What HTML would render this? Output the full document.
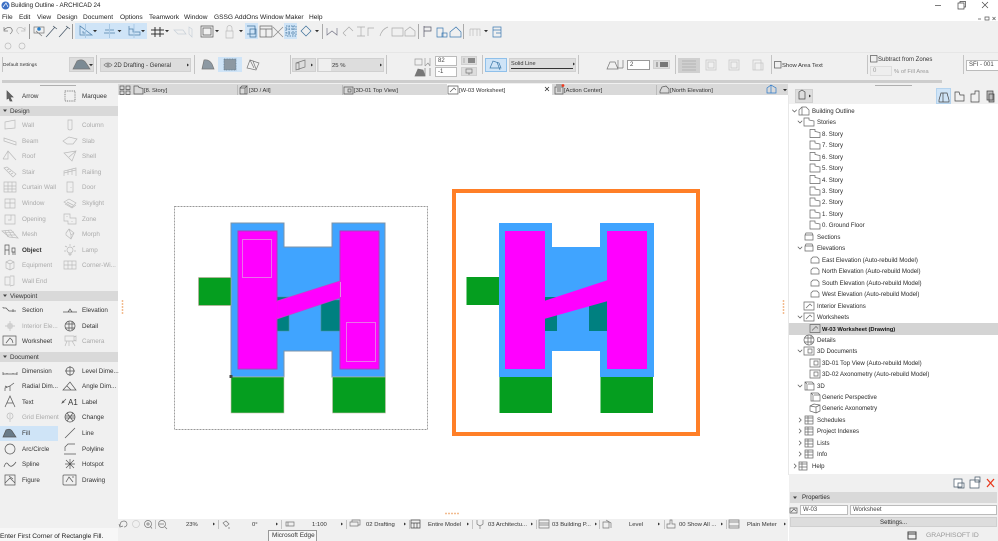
<!DOCTYPE html>
<html><head><meta charset="utf-8"><title>Building Outline - ARCHICAD 24</title>
<style>
html,body{margin:0;padding:0;background:#fff}
#p{position:relative;width:998px;height:541px;overflow:hidden;background:#fff;font:6.3px/10px "Liberation Sans",sans-serif;color:#333;filter:blur(.35px)}
.b{position:absolute}
.t{position:absolute;white-space:nowrap;line-height:10px;height:10px;margin-top:1px}
.r{font-size:6.1px;color:#2a2a2a}
.d{color:#aaa}
.h{position:absolute;background:#d9d9d9;color:#444;left:0;width:118px}
.m{font-size:6.6px;color:#222}
.i{position:absolute;background:#fff;border:1px solid #bbb;box-sizing:border-box;font-size:6px;line-height:8px;padding-left:2px;color:#444}
.g{position:absolute;background:#ddd;border:1px solid #d0d0d0;box-sizing:border-box}
.v{position:absolute;width:1px;background:#c4c4c4}
.s{font-size:5.9px;color:#333}
svg{position:absolute;left:0;top:0}
</style></head><body><div id="p">
<div class="b" style="left:0;top:21px;width:998px;height:74px;background:#f0f0f0"></div>
<div class="b" style="left:0;top:52px;width:998px;height:1px;background:#e6e6e6"></div>
<div class="b" style="left:2px;top:80px;width:940px;height:3px;background:#cdcdcd"></div>
<div class="b" style="left:0;top:95px;width:118px;height:433px;background:#f0f0f0"></div>
<div class="b" style="left:118px;top:84px;width:670px;height:11px;background:#d9d9d9"></div>
<div class="b" style="left:447px;top:84px;width:105px;height:11px;background:#fff"></div>
<div class="b" style="left:788px;top:84px;width:210px;height:20px;background:#f0f0f0"></div>
<div class="b" style="left:788px;top:95px;width:1px;height:380px;background:#e8e8e8"></div>
<div class="b" style="left:789px;top:474px;width:209px;height:67px;background:#f0f0f0"></div>
<div class="b" style="left:118px;top:519px;width:670px;height:22px;background:#f0f0f0"></div>
<div class="b" style="left:0;top:528px;width:118px;height:13px;background:#f7f7f7"></div>
<div class="b" style="left:789px;top:323px;width:209px;height:11.5px;background:#d4d4d4"></div>
<div class="b" style="left:75px;top:23px;width:72px;height:16px;background:#cfe4f7"></div>
<div class="b" style="left:245px;top:23px;width:13px;height:16px;background:#cfe4f7"></div>
<div class="b" style="left:284px;top:23px;width:13px;height:16px;background:#cfe4f7"></div>
<div class="b" style="left:936px;top:88px;width:15px;height:16px;background:#cfe4f7;border:1px solid #b4d3ee;box-sizing:border-box"></div>
<div class="b" style="left:0;top:426px;width:58px;height:15px;background:#cfe4f7"></div>
<div class="b" style="left:218px;top:57px;width:24px;height:15px;background:#cfe4f7"></div>
<div class="b" style="left:485px;top:58px;width:22px;height:14px;background:#cfe4f7;border:1px solid #8fc0ea;box-sizing:border-box"></div>
<div class="g" style="left:69px;top:57px;width:25px;height:15px"></div>
<div class="g" style="left:100px;top:58px;width:91px;height:14px"></div>
<div class="g" style="left:292px;top:58px;width:24px;height:14px"></div>
<div class="g" style="left:317px;top:58px;width:67px;height:14px"></div>
<div class="b" style="left:319px;top:59px;width:12px;height:12px;background:#efefef"></div>
<div class="g" style="left:509px;top:58px;width:67px;height:14px"></div>
<div class="b" style="left:511px;top:68px;width:62px;height:1px;background:#333"></div>
<div class="g" style="left:461px;top:56px;width:16px;height:9px"></div>
<div class="g" style="left:461px;top:67px;width:16px;height:9px"></div>
<div class="g" style="left:653px;top:60px;width:17px;height:9px"></div>
<div class="b" style="left:678px;top:58px;width:22px;height:15px;background:#d0d0d0"></div>
<div class="g" style="left:795px;top:89px;width:18px;height:14px"></div>
<div class="i" style="left:435px;top:56px;width:22px;height:10px">82</div>
<div class="i" style="left:435px;top:67px;width:22px;height:10px">-1</div>
<div class="i" style="left:627px;top:60px;width:23px;height:10px;border-color:#999">2</div>
<div class="i" style="left:870px;top:66px;width:22px;height:10px;background:#eee;color:#999;border-color:#ddd">0</div>
<div class="i" style="left:966px;top:60px;width:34px;height:11px;line-height:9px">SFI - 001</div>
<div class="v" style="left:96px;top:55px;height:19px"></div>
<div class="v" style="left:194px;top:55px;height:19px"></div>
<div class="v" style="left:290px;top:55px;height:19px"></div>
<div class="v" style="left:386px;top:55px;height:19px"></div>
<div class="v" style="left:482px;top:55px;height:19px"></div>
<div class="v" style="left:578px;top:55px;height:19px"></div>
<div class="v" style="left:675px;top:55px;height:19px"></div>
<div class="v" style="left:771px;top:55px;height:19px"></div>
<div class="v" style="left:867px;top:55px;height:19px"></div>
<div class="v" style="left:963px;top:55px;height:19px"></div>
<div class="v" style="left:2px;top:57px;height:15px"></div>
<div class="v" style="left:29px;top:24px;height:15px;background:#999"></div>
<div class="v" style="left:72px;top:24px;height:15px;background:#999"></div>
<div class="v" style="left:322px;top:24px;height:15px;background:#aaa"></div>
<div class="v" style="left:418px;top:24px;height:15px;background:#aaa"></div>
<div class="v" style="left:463px;top:24px;height:15px;background:#aaa"></div>
<div class="v" style="left:237px;top:85px;height:10px;background:#bbb"></div>
<div class="v" style="left:342px;top:85px;height:10px;background:#bbb"></div>
<div class="v" style="left:656px;top:85px;height:10px;background:#bbb"></div>
<div class="v" style="left:155px;top:520px;height:9px"></div>
<div class="v" style="left:218px;top:520px;height:9px"></div>
<div class="v" style="left:281px;top:520px;height:9px"></div>
<div class="v" style="left:346px;top:520px;height:9px"></div>
<div class="v" style="left:409px;top:520px;height:9px"></div>
<div class="v" style="left:472px;top:520px;height:9px"></div>
<div class="v" style="left:536px;top:520px;height:9px"></div>
<div class="v" style="left:599px;top:520px;height:9px"></div>
<div class="v" style="left:664px;top:520px;height:9px"></div>
<div class="v" style="left:726px;top:520px;height:9px"></div>
<div class="g" style="left:790px;top:517px;width:207px;height:10px"></div>
<div class="h" style="top:106px;height:10px"></div>
<div class="h" style="top:291px;height:10px"></div>
<div class="h" style="top:352px;height:10px"></div>
<div class="b" style="left:790px;top:492px;width:207px;height:11px;background:#d9d9d9"></div>
<div class="i" style="left:800px;top:505px;width:48px;height:10px">W-03</div>
<div class="i" style="left:850px;top:505px;width:147px;height:10px">Worksheet</div>

<svg width="998" height="541" viewBox="0 0 998 541" fill="none" stroke-width=".7">
<defs>
<path id="wall" d="M-5-3 5-5V3L-5 4Z"/>
<path id="column" d="M-2-5H2V4Q0 6-2 4Z"/>
<path id="beam" d="M-6-3 6 1V4L-6 0ZM-6 0"/>
<path id="slab" d="M-7 0-1-4 7-2 3 3-3 3Z"/>
<path id="roof" d="M-7 3-2-5 6 4M-7 3H-2L-2-5"/>
<path id="shell" d="M-6-3 6-5 2 5ZM-1 1 6-5"/>
<path id="stair" d="M-6-4-3-5 6 2 3 5ZM-3-2-1-3M-1 0 1-1M1 2 3 1"/>
<path id="rail" d="M-6 4V-1L6-4V4M-2 3V-2M2 3V-3M-6 1 6-2"/>
<path id="curtain" d="M-6-5H6V5H-6ZM-2-5V5M2-5V5M-6-1H6M-6 2H6"/>
<path id="door" d="M-3-5H3V5H-3ZM1 0V1"/>
<path id="window" d="M-5-4H5V5H-5ZM0-4V5M-5 0H5"/>
<path id="sky" d="M-6-1-1-4 6 0 2 4ZM-5 1 2 5 6 2M-3-1 3 2"/>
<path id="opening" d="M-5-4H5V5H-5ZM1-4V1H-2"/>
<path id="zone" d="M-6-5H0V-1H6V5H-2V2H-6ZM-3-2V-3M2 2V3"/>
<path id="mesh" d="M-8-3 1-4 8 4-1 3ZM-5-3-2 3M-2-4 3 4M-6-1 4-2M-3 1 6 1"/>
<path id="morph" d="M-4-1-1-5 4-1 1 5-4 1ZM-1-5 1 1 4-1M1 1 1 5"/>
<path id="object" d="M-5 5V-5H-1V0H-5M-1 0V5M2-2H5V2H2ZM3 2V5M5 2V5"/>
<path id="lamp" d="M-3 0A3 3 0 0 1 3 0A3 3 0 0 1-3 0M0-6V-4M-5-4-3-3M5-4 3-3M-6 1H-4M6 1H4M-2 4H2M-1 5H1"/>
<path id="equip" d="M-4-3 0-5 4-3V3L0 5-4 3ZM-4-3 0-1 4-3M0-1V5"/>
<path id="corner" d="M-6-4H6V4H-6ZM-2-4V4M2-4V4M-6 0H6"/>
<path id="wallend" d="M-5-4H0V4H-5ZM0-5 4-5V4L0 5"/>
<path id="arrow" d="M-3-5 3 1H0L2 5 0 5-1 2-3 3Z"/>
<path id="section" d="M-7-2H-4L-1 1H6M-7-2V-3M3-1V2"/>
<path id="elev" d="M-7 2H7M-2 2 0-1 2 2"/>
<path id="inter" d="M0-5V5M-5 0H5M-2-2H2V2H-2Z"/>
<path id="detail" d="M-5 0A5 5 0 1 1 5 0A5 5 0 1 1-5 0M-5-2H5M-5 2H5M-1-5V5M2-4V4"/>
<path id="work" d="M-7-5H6V4H-7ZM-4 2 0-3 2-1 3 2"/>
<path id="cam" d="M-5-5H4V0H-5ZM-3 0-5 5M2 0 5 5M-1 0V5M4-4 6-5V0L4-1"/>
<path id="dim" d="M-7 3H7M-7 1V4M7 1V4M-3 3V2M3 3V2"/>
<path id="level" d="M-5 0H5M0-5V5M-4 0A4 4 0 0 1 4 0A4 4 0 0 1-4 0"/>
<path id="radial" d="M-5 5V2L0 0 4-3M0 0V5M-5 0-3 1"/>
<path id="angle" d="M-7 4H6L0-4ZM-3 0 1 4"/>
<path id="text" d="M-5 5 0-6 5 5M-3 1H3"/>
<path id="grid" d="M0 5V2M-3-1A3 3 0 0 1 3-1A3 3 0 0 1-3-1M0-3V1"/>
<path id="change" d="M-5 0A5 5 0 1 1 5 0A5 5 0 1 1-5 0M-5-1H5M-5 1H5M-3-4 3 4M3-4-3 4"/>
<path id="line" d="M-5 5 5-5"/>
<path id="circle" d="M-5 0A5 5 0 1 1 5 0A5 5 0 1 1-5 0"/>
<path id="poly" d="M-6 5H6M-5 2V-2L-2-5H5"/>
<path id="spline" d="M-6 3Q-4-3-2 0T2 2 6-2"/>
<path id="hot" d="M-5 0H5M0-5V5M-4-4 4 4M4-4-4 4"/>
<path id="figure" d="M-5-5H5V5H-5ZM-5 3 0-2 5 3M-1-4 3-1"/>
<path id="draw" d="M-7-4Q-7-5-6-5H6V5H-6Q-7 5-7 4ZM-4 2-1-3 3 2M2-3H4"/>
<path id="fill" d="M-7 4-4-3Q0-5 2-2L6 4Z"/>
<path id="marq" d="M-5-5H5V5H-5Z" stroke-dasharray="1 .8"/>
<path id="story" d="M-5-4H0V-2L5-1V4H-5Z"/>
<path id="sect" d="M-4-2-3-4H3L4-2V3H-4ZM-4-2H4"/>
<path id="elevh" d="M-4 3V-1L-2-3H2L4-1V3Z"/>
<path id="house" d="M-5 4V-1L-2-4 2-4 5-1V4ZM-2-4V4"/>
<path id="wsh" d="M-5-4H5V4H-5ZM-3 2 1-2 3 0"/>
<path id="d3" d="M-4-4H3L5-2V4H-4ZM-4-4-2-2M-1-2H5M-2-2V4"/>
<path id="d3d" d="M-5-4H5V4H-5ZM-1-2H3V2H-1Z"/>
<path id="list" d="M-4-4H4V4H-4ZM-4-2H4M-4 1H4M-1-4V4"/>
<path id="cube" d="M-5-2-1-4 5-3V3L1 5-5 3ZM1 5V-1L-5-2M1-1 5-3"/>
<path id="caret" d="M0-1.5 2 0 0 1.5Z" fill="#333" stroke="none"/>
<path id="down" d="M-2-1H2L0 1.2Z" fill="#333" stroke="none"/>
<path id="chev" d="M-2.2-1.2 0 1 2.2-1.2"/>
<path id="chevr" d="M-1-2.2 1.2 0-1 2.2"/>
</defs>
<rect x="174.500" y="206.500" width="253" height="223" stroke="#777" stroke-dasharray="2 1"/>
<path d="M231 223H284V247H332V223H385V377H332V351H284V377H231Z" fill="#40a4ff" stroke="#7c93a8" stroke-width="1"/>
<rect x="198.500" y="277.500" width="32.500" height="28" fill="#059e1f" stroke="#c9a8a0" stroke-width=".6"/>
<rect x="231" y="377" width="53" height="36" fill="#059e1f" stroke="#c9c0b0" stroke-width=".6"/>
<rect x="332.500" y="377" width="53" height="36" fill="#059e1f" stroke="#c9c0b0" stroke-width=".6"/>
<path d="M277 297H289V331H277ZM321 300H340V331H321Z" fill="#008080" stroke="#4d8f96" stroke-width=".6"/>
<path d="M238 231H277V369H238ZM340 231H379V369H340Z" fill="#ff00ff" stroke="#b23bb8" stroke-width="1"/>
<path d="M277 301 340 281V298L277 319Z" fill="#ff00ff" stroke="#c93ccc" stroke-width=".7"/>
<path d="M276 302V318" stroke="#ff00ff" stroke-width="2.500"/>
<path d="M340.500 282V297" stroke="#e08ae0" stroke-width="1"/>
<rect x="242.500" y="239.500" width="29" height="38" stroke="#e77fe7" stroke-width=".9"/>
<rect x="346.500" y="322.500" width="29" height="39" stroke="#e77fe7" stroke-width=".9"/>
<rect x="229.500" y="375" width="3" height="3" fill="#444"/>
<rect x="454" y="191" width="244" height="243" stroke="#ff7f27" stroke-width="4"/>
<path d="M499 223H552V247H600V223H654V377H600V351H552V377H499Z" fill="#40a4ff"/>
<rect x="466.500" y="277" width="32.500" height="28" fill="#059e1f"/>
<rect x="499.500" y="377" width="52.500" height="36" fill="#059e1f"/>
<rect x="600.500" y="377" width="52.500" height="36" fill="#059e1f"/>
<path d="M545 297H557V331H545ZM589 300H607V331H589Z" fill="#008080"/>
<path d="M505 231H545V369H505ZM607 231H647V369H607Z" fill="#ff00ff"/>
<path d="M544 301 608 280V301L544 319Z" fill="#ff00ff"/>
<path d="M40 85.500H76M875 85.500H912" stroke="#999"/>
<path d="M445 513.500H460" stroke="#f2bc90" stroke-dasharray="2 1" stroke-width="1.500"/>
<path d="M122.500 300V315M783.500 300V315" stroke="#f2bc90" stroke-dasharray="2 1" stroke-width="1.500"/>
<g stroke="#bbb">
<use href="#wall" x="10" y="125"/><use href="#column" x="70" y="125"/>
<use href="#beam" x="10" y="141"/><use href="#slab" x="70" y="141"/>
<use href="#roof" x="10" y="156"/><use href="#shell" x="70" y="156"/>
<use href="#stair" x="10" y="172"/><use href="#rail" x="70" y="172"/>
<use href="#curtain" x="10" y="187"/><use href="#door" x="70" y="187"/>
<use href="#window" x="10" y="203"/><use href="#sky" x="70" y="203"/>
<use href="#opening" x="10" y="219"/><use href="#zone" x="70" y="219"/>
<use href="#mesh" x="10" y="234"/><use href="#morph" x="70" y="234"/>
<use href="#lamp" x="70" y="250"/>
<use href="#equip" x="10" y="265"/><use href="#corner" x="70" y="265"/>
<use href="#wallend" x="10" y="281"/>
<use href="#inter" x="10" y="326"/><use href="#cam" x="70" y="341"/>
<use href="#grid" x="10" y="417"/>
</g>
<g stroke="#555">
<use href="#arrow" x="10" y="96" fill="#666"/><use href="#marq" x="70" y="96"/>
<use href="#object" x="10" y="250"/>
<use href="#section" x="10" y="310"/><use href="#elev" x="70" y="310"/>
<use href="#detail" x="70" y="326"/><use href="#work" x="10" y="341"/>
<use href="#dim" x="10" y="371"/><use href="#level" x="70" y="371"/>
<use href="#radial" x="10" y="386"/><use href="#angle" x="70" y="386"/>
<use href="#text" x="10" y="402"/>
<use href="#change" x="70" y="417"/>
<use href="#fill" x="10" y="433" fill="#6a7b88"/><use href="#line" x="70" y="433"/>
<use href="#circle" x="10" y="449"/><use href="#poly" x="70" y="449"/>
<use href="#spline" x="10" y="464"/><use href="#hot" x="70" y="464"/>
<use href="#figure" x="10" y="480"/><use href="#draw" x="70" y="480"/>
<path d="M63 402 66 399M62 403 64 402 63 401Z"/>
</g>
<path d="M3 109.500H7L5 112Z M3 294.500H7L5 297Z M3 355.500H7L5 358Z M793 496.500H797L795 499Z" fill="#444"/>
<g stroke="#777">
<path d="M4 30Q8 26 11 28 14 31 10 34M4 27V31H8"/>
<path d="M25 30Q21 26 18 28 15 31 19 34M25 27V31H21" stroke="#bbb"/>
<path d="M34 27H44V33H34ZM36 31 42 36"/>
<circle cx="39" cy="29" r="1.800" fill="#2a7fc8" stroke="none"/>
<path d="M47 36 55 27M46 37 48 35M53 26 57 29" stroke="#456"/>
<path d="M60 36 68 27M59 37 61 35M66 26 70 29" stroke="#456"/>
<path d="M80 26V35H92ZM83 31V33H86" stroke="#4d7ea8"/>
<path d="M104 33H115M105 30 114 30" stroke="#4d7ea8"/>
<path d="M129 26V35H140V32H133V29H129" stroke="#4d7ea8"/>
<path d="M155 27V37M160 27V37M151 30H164M151 34H164" stroke="#333" stroke-width="1"/>
<path d="M174 30 183 30 186 34 178 34Z" stroke="#c8d0d8"/>
<path d="M189 27V34L192 37V29Z" stroke="#c8d0d8"/>
<path d="M201 26H213V37H201ZM203 28H211V35H203Z" stroke="#555"/>
<path d="M226 31H233V38H226ZM227 31V28A2 2 0 0 1 232 28V31" stroke="#bbb"/>
<path d="M247 26H255V34H247M250 29H256V37H250Z" stroke="#3b6e99"/>
<path d="M260 26H272V37H260ZM260 29H272M266 29V37" stroke="#666"/>
<path d="M273 27 283 37M283 27 273 37" stroke="#888"/>
<path d="M286 26H296V36H286ZM289 26V36M293 26V36M286 29H296M286 33H296" stroke="#3b6e99" stroke-dasharray="1.500 1"/>
<path d="M301 31 306 26 311 31 306 36Z" stroke="#3b6e99"/>
<path d="M327 28V35L332 31 337 35V28" stroke="#778"/>
<g stroke="#aaa"><path d="M343 33 349 27 353 31M343 33 346 36"/><path d="M357 27H365M361 27V36M357 36H365"/><path d="M368 36V28H374"/><path d="M380 36Q382 29 388 27"/><path d="M392 28H403V36H392Z"/><path d="M405 36V31L410 27 415 31V36Z"/></g>
<path d="M424 26V37M424 27H431V31H424" stroke="#556"/>
<path d="M437 28H443V37H437ZM442 33H447V37H442Z" stroke="#3b78b0"/>
<path d="M450 32 456 27 461 32V37H450Z" stroke="#3b78b0"/>
<path d="M470 29H480V36M470 29V36M473 29V36M477 29V36" stroke="#bbb"/>
<path d="M493 27H501V37H493ZM493 30H501M496 33H501" stroke="#3b78b0"/>
<circle cx="8" cy="46" r="3" stroke="#bbb"/><circle cx="22" cy="46" r="3" stroke="#bbb"/>
</g>
<use href="#down" x="95" y="31"/><use href="#down" x="119.500" y="31"/><use href="#down" x="143" y="31"/><use href="#down" x="167" y="31"/><use href="#down" x="217" y="31"/><use href="#down" x="241" y="31"/><use href="#down" x="317" y="31"/><use href="#down" x="486" y="31"/>
<path d="M85.500 24V38M109.500 24V38M134 24V38" stroke="#a8c8e4" stroke-width="1"/>
<circle cx="5.500" cy="5.500" r="4" fill="#3b6fc4"/>
<path d="M3 7 6 3 8 7" stroke="#fff"/>
<path d="M935 5.500H941" stroke="#444"/>
<path d="M958 3H964V9H958ZM960 3V1.500H965.500V7H964" stroke="#444"/>
<path d="M982 2 988 8M988 2 982 8" stroke="#444"/>
<path d="M978 19H981M985 17H989V20H985ZM992.500 17 995.500 20M995.500 17 992.500 20" stroke="#555"/>
<g stroke="#777">
<path d="M73 69 77 61Q83 58 86 63L90 69Z" fill="#7b8a94"/>
<path d="M104 65Q108 61 112 65 108 69 104 65Z"/><circle cx="108" cy="65" r="1"/>
<path d="M202 69 204 60Q209 59 212 64L214 69Z" fill="#8d99a3"/>
<path d="M224 59H236V70H224Z" fill="#8c98a2" stroke="#5b7a92" stroke-dasharray="1 .6"/>
<path d="M247 68 250 60 259 63 256 70ZM250 60 254 68M253 61 256 69"/>
<path d="M296 63 305 60V67L296 70ZM296 63H299V70"/>
<path d="M415 59H422V65H415ZM425 58V66M430 58V66M425 66 428 63 430 66" stroke="#999"/>
<path d="M415 76 418 69 423 70 425 76Z" fill="#777"/><path d="M425 68V76M430 68V76"/>
<path d="M490 68 493 61 499 63 501 68ZM497 62 500 70" stroke="#3b78a8"/>
<path d="M607 69 610 62 615 62 618 69ZM618 60V68M623 60V68M618 68H623"/>
<path d="M682 61H696M682 64H696M682 67H696M682 70H696" stroke="#aaa"/>
<g stroke="#c4c4c4"><rect x="706" y="60" width="10" height="10"/><rect x="708" y="62" width="6" height="6"/><rect x="729" y="60" width="10" height="10"/><rect x="731" y="62" width="6" height="6"/><path d="M753 60H761V70H753ZM755 63H763V70H755Z"/></g>
<path d="M464 58V63" stroke="#999"/><rect x="468" y="58" width="7" height="5" fill="#888" stroke="none"/>
<rect x="656" y="62" width="2" height="5" fill="#aaa" stroke="none"/><rect x="660" y="62" width="8" height="5" fill="#777" stroke="none"/>
<path d="M466 69H472V73H466ZM469 73V75"/>
</g>
<rect x="774.500" y="61.500" width="6.500" height="6.500" stroke="#555"/>
<rect x="870.500" y="55.500" width="6.500" height="6.500" stroke="#555"/>
<use href="#caret" x="187" y="65"/><use href="#caret" x="311" y="65"/><use href="#caret" x="380" y="65"/><use href="#caret" x="573" y="64"/><use href="#down" x="91" y="65"/><use href="#caret" x="809" y="96"/>
<g stroke="#555">
<path d="M120 86H124V89.500H120ZM126 86H130V89.500H126ZM120 91H124V94.500H120ZM126 91H130V94.500H126Z"/>
<path d="M134 94V86H138L139 87.500 143 88.500V94Z"/>
<path d="M240 88H245L247 86V94H240ZM240 88 242 86H247M245 88V94"/>
<path d="M344 87H353V94H344ZM348 89H351V92H348Z"/>
<path d="M448 86H458V94H448ZM450 92 454 88 456 90"/>
<path d="M555 87V94H563V87ZM556 85H562M557 89H561M557 91H561"/>
<path d="M660 91 662 87 666 86 669 89V93H660Z"/>
<path d="M545 87 549 91M549 87 545 91" stroke="#222"/>
<path d="M767 93V88L771 85 776 88V93ZM771 85V93" stroke="#2a78c8"/>
<path d="M799 92 802 90 805 92V99H799Z" stroke="#444"/>
</g>
<circle cx="563" cy="85.500" r="1.400" fill="#f03a1e"/>
<use href="#down" x="785" y="90"/>
<g stroke="#444">
<path d="M939 100 941 93 947 93 949 100V102H939ZM943 93V102"/>
<path d="M955 92V101H964V95H960L959 92Z"/>
<path d="M971 94H975V91H979V102H971Z"/>
<path d="M987 91H993V100H987ZM989 94H994V102H989Z" fill="#bbb"/>
</g>
<g stroke="#666">
<use href="#house" x="804" y="111"/><use href="#story" x="809" y="122"/>
<use href="#story" x="815" y="133.500"/><use href="#story" x="815" y="145"/><use href="#story" x="815" y="156.500"/><use href="#story" x="815" y="168"/><use href="#story" x="815" y="179.500"/><use href="#story" x="815" y="191"/><use href="#story" x="815" y="202"/><use href="#story" x="815" y="214"/><use href="#story" x="815" y="225"/>
<use href="#sect" x="809" y="237"/><use href="#sect" x="809" y="248"/>
<use href="#elevh" x="815" y="260"/><use href="#elevh" x="815" y="271"/><use href="#elevh" x="815" y="283"/><use href="#elevh" x="815" y="294"/>
<use href="#wsh" x="809" y="306"/><use href="#wsh" x="809" y="317"/><use href="#wsh" x="815" y="328.500"/>
<use href="#detail" x="809" y="340"/><use href="#d3d" x="809" y="351"/><use href="#d3d" x="815" y="363"/><use href="#d3d" x="815" y="374"/>
<use href="#d3" x="809" y="386"/><use href="#d3" x="815" y="397"/><use href="#cube" x="815" y="408"/>
<use href="#list" x="809" y="420"/><use href="#list" x="809" y="431"/><use href="#list" x="809" y="443"/><use href="#list" x="809" y="454"/><use href="#list" x="803" y="466"/>
</g>
<g stroke="#555">
<use href="#chev" x="794.500" y="111"/><use href="#chev" x="800" y="122"/><use href="#chev" x="800" y="248"/><use href="#chev" x="800" y="317"/><use href="#chev" x="800" y="351"/><use href="#chev" x="800" y="386"/>
<use href="#chevr" x="800" y="420"/><use href="#chevr" x="800" y="431"/><use href="#chevr" x="800" y="443"/><use href="#chevr" x="800" y="454"/><use href="#chevr" x="795" y="466"/>
</g>
<path d="M954 479H962V487H954Z M958 483H964V488H958Z" stroke="#456" fill="#fff"/>
<path d="M970 480H979V488H970ZM975 477H980V482H975Z" stroke="#456" fill="#fff"/>
<path d="M987 479 994 487M994 479 987 487" stroke="#e8391d" stroke-width="1.300"/>
<path d="M790 508H797V513H790ZM791 512 794 509 796 511" stroke="#555"/>
<path d="M908 532H916V539H908ZM908 534H916" stroke="#444" stroke-width="1"/>
<g stroke="#777">
<path d="M120 526Q120 521 124 521A3 3 0 0 1 124 527M119 524 120 527 123 526"/>
<circle cx="136" cy="524" r="3.500" stroke="#ccc"/>
<circle cx="148" cy="524" r="3.500"/><path d="M146 524H150M148 522V526M150.500 526.500 152 528.500"/>
<circle cx="162" cy="524" r="3.500"/><path d="M165 527 167 529M159 524H164"/>
<path d="M223 523 226 521 229 524 226 526.500ZM228 528H230"/>
<path d="M286 522H294V526H286ZM288 522V526"/>
<path d="M350 522H358V526H350ZM352 522V520H360V525H358"/>
<path d="M411 520H420V528H411ZM411 523H420M414 523V528M417 523V528" stroke="#444"/>
<path d="M477 520V524Q480 527 483 524V520M480 526V529"/>
<path d="M539 520H549V528H539ZM539 523H549M539 525H549"/>
<path d="M603 522H609V528H603ZM606 520 611 523V528"/>
<path d="M667 528H675V524H672V520H670V524H667Z"/>
<path d="M729 520H739V528H729ZM729 522H739M729 526H739"/>
</g>
<use href="#caret" x="213" y="524"/><use href="#caret" x="276" y="524"/><use href="#caret" x="341" y="524"/><use href="#caret" x="404" y="524"/><use href="#caret" x="467" y="524"/><use href="#caret" x="531" y="524"/><use href="#caret" x="595" y="524"/><use href="#caret" x="658" y="524"/><use href="#caret" x="721" y="524"/><use href="#caret" x="784" y="524"/>
</svg>

<div class="t" style="left:11px;top:0;font-size:6.2px;color:#222">Building Outline - ARCHICAD 24</div>
<div class="t m" style="left:2px;top:12px">File</div>
<div class="t m" style="left:19px;top:12px">Edit</div>
<div class="t m" style="left:37px;top:12px">View</div>
<div class="t m" style="left:57px;top:12px">Design</div>
<div class="t m" style="left:83px;top:12px">Document</div>
<div class="t m" style="left:120px;top:12px">Options</div>
<div class="t m" style="left:149px;top:12px">Teamwork</div>
<div class="t m" style="left:184px;top:12px">Window</div>
<div class="t m" style="left:214px;top:12px">GSSG AddOns</div>
<div class="t m" style="left:260px;top:12px">Window Maker</div>
<div class="t m" style="left:309px;top:12px">Help</div>
<div class="t" style="left:3px;top:60px;font-size:4.8px">Default Settings</div>
<div class="t s" style="left:114px;top:60px;font-size:6px">2D Drafting - General</div>
<div class="t s" style="left:332px;top:60px">25 %</div>
<div class="t s" style="left:511px;top:58px;font-size:5.6px">Solid Line</div>
<div class="t s" style="left:782px;top:60px">Show Area Text</div>
<div class="t s" style="left:878px;top:54px;font-size:6px">Subtract from Zones</div>
<div class="t s" style="left:894px;top:66px;color:#999">% of Fill Area</div>
<div class="t s" style="left:144px;top:85px;font-size:5.8px">[8. Story]</div>
<div class="t s" style="left:249px;top:85px;font-size:5.8px">[3D / All]</div>
<div class="t s" style="left:354px;top:85px;font-size:5.8px">[3D-01 Top View]</div>
<div class="t s" style="left:459px;top:85px;font-size:5.8px">[W-03 Worksheet]</div>
<div class="t s" style="left:564px;top:85px;font-size:5.8px">[Action Center]</div>
<div class="t s" style="left:670px;top:85px;font-size:5.8px">[North Elevation]</div>
<div class="t" style="left:22px;top:91px">Arrow</div><div class="t" style="left:82px;top:91px">Marquee</div>
<div class="t" style="left:10px;top:106px">Design</div>
<div class="t d" style="left:22px;top:120px">Wall</div><div class="t d" style="left:82px;top:120px">Column</div>
<div class="t d" style="left:22px;top:136px">Beam</div><div class="t d" style="left:82px;top:136px">Slab</div>
<div class="t d" style="left:22px;top:151px">Roof</div><div class="t d" style="left:82px;top:151px">Shell</div>
<div class="t d" style="left:22px;top:167px">Stair</div><div class="t d" style="left:82px;top:167px">Railing</div>
<div class="t d" style="left:22px;top:182px">Curtain Wall</div><div class="t d" style="left:82px;top:182px">Door</div>
<div class="t d" style="left:22px;top:198px">Window</div><div class="t d" style="left:82px;top:198px">Skylight</div>
<div class="t d" style="left:22px;top:214px">Opening</div><div class="t d" style="left:82px;top:214px">Zone</div>
<div class="t d" style="left:22px;top:229px">Mesh</div><div class="t d" style="left:82px;top:229px">Morph</div>
<div class="t" style="left:22px;top:245px;font-weight:bold">Object</div><div class="t d" style="left:82px;top:245px">Lamp</div>
<div class="t d" style="left:22px;top:260px">Equipment</div><div class="t d" style="left:82px;top:260px">Corner-Wi...</div>
<div class="t d" style="left:22px;top:276px">Wall End</div>
<div class="t" style="left:10px;top:291px">Viewpoint</div>
<div class="t" style="left:22px;top:305px">Section</div><div class="t" style="left:82px;top:305px">Elevation</div>
<div class="t d" style="left:22px;top:321px">Interior Ele...</div><div class="t" style="left:82px;top:321px">Detail</div>
<div class="t" style="left:22px;top:336px">Worksheet</div><div class="t d" style="left:82px;top:336px">Camera</div>
<div class="t" style="left:10px;top:352px">Document</div>
<div class="t" style="left:22px;top:366px">Dimension</div><div class="t" style="left:82px;top:366px">Level Dime...</div>
<div class="t" style="left:22px;top:381px">Radial Dim...</div><div class="t" style="left:82px;top:381px">Angle Dim...</div>
<div class="t" style="left:22px;top:397px">Text</div><div class="t" style="left:68px;top:397px;font-size:8px">A1</div><div class="t" style="left:82px;top:397px">Label</div>
<div class="t d" style="left:22px;top:412px">Grid Element</div><div class="t" style="left:82px;top:412px">Change</div>
<div class="t" style="left:22px;top:428px">Fill</div><div class="t" style="left:82px;top:428px">Line</div>
<div class="t" style="left:22px;top:444px">Arc/Circle</div><div class="t" style="left:82px;top:444px">Polyline</div>
<div class="t" style="left:22px;top:459px">Spline</div><div class="t" style="left:82px;top:459px">Hotspot</div>
<div class="t" style="left:22px;top:475px">Figure</div><div class="t" style="left:82px;top:475px">Drawing</div>
<div class="t" style="left:0;top:531px;font-size:6.6px;color:#222">Enter First Corner of Rectangle Fill.</div>
<div class="t r" style="left:812px;top:106px">Building Outline</div>
<div class="t r" style="left:817px;top:117px">Stories</div>
<div class="t r" style="left:822px;top:128.500px">8. Story</div>
<div class="t r" style="left:822px;top:140px">7. Story</div>
<div class="t r" style="left:822px;top:151.500px">6. Story</div>
<div class="t r" style="left:822px;top:163px">5. Story</div>
<div class="t r" style="left:822px;top:174.500px">4. Story</div>
<div class="t r" style="left:822px;top:186px">3. Story</div>
<div class="t r" style="left:822px;top:197px">2. Story</div>
<div class="t r" style="left:822px;top:209px">1. Story</div>
<div class="t r" style="left:822px;top:220px">0. Ground Floor</div>
<div class="t r" style="left:817px;top:232px">Sections</div>
<div class="t r" style="left:817px;top:243px">Elevations</div>
<div class="t r" style="left:822px;top:255px">East Elevation (Auto-rebuild Model)</div>
<div class="t r" style="left:822px;top:266px">North Elevation (Auto-rebuild Model)</div>
<div class="t r" style="left:822px;top:278px">South Elevation (Auto-rebuild Model)</div>
<div class="t r" style="left:822px;top:289px">West Elevation (Auto-rebuild Model)</div>
<div class="t r" style="left:817px;top:301px">Interior Elevations</div>
<div class="t r" style="left:817px;top:312px">Worksheets</div>
<div class="t r" style="left:822px;top:323.500px;font-weight:bold;color:#111;font-size:5.8px">W-03 Worksheet (Drawing)</div>
<div class="t r" style="left:817px;top:335px">Details</div>
<div class="t r" style="left:817px;top:346px">3D Documents</div>
<div class="t r" style="left:822px;top:358px">3D-01 Top View (Auto-rebuild Model)</div>
<div class="t r" style="left:822px;top:369px">3D-02 Axonometry (Auto-rebuild Model)</div>
<div class="t r" style="left:817px;top:381px">3D</div>
<div class="t r" style="left:822px;top:392px">Generic Perspective</div>
<div class="t r" style="left:822px;top:403px">Generic Axonometry</div>
<div class="t r" style="left:817px;top:415px">Schedules</div>
<div class="t r" style="left:817px;top:426px">Project Indexes</div>
<div class="t r" style="left:817px;top:438px">Lists</div>
<div class="t r" style="left:817px;top:449px">Info</div>
<div class="t r" style="left:812px;top:461px">Help</div>
<div class="t r" style="left:802px;top:492px">Properties</div>
<div class="t r" style="left:880px;top:517px">Settings...</div>
<div class="t" style="left:926px;top:530px;font-size:6.8px;color:#999">GRAPHISOFT ID</div>
<div class="t s" style="left:186px;top:519px">23%</div>
<div class="t s" style="left:252px;top:519px">0°</div>
<div class="t s" style="left:312px;top:519px">1:100</div>
<div class="t s" style="left:366px;top:519px">02 Drafting</div>
<div class="t s" style="left:428px;top:519px">Entire Model</div>
<div class="t s" style="left:488px;top:519px">03 Architectu...</div>
<div class="t s" style="left:552px;top:519px">03 Building P...</div>
<div class="t s" style="left:629px;top:519px">Level</div>
<div class="t s" style="left:679px;top:519px">00 Show All ...</div>
<div class="t s" style="left:747px;top:519px">Plain Meter</div>
<div class="b" style="left:268px;top:530px;width:49px;height:12px;background:#f7f7f7;border:1px solid #999;box-sizing:border-box;font-size:6.4px;line-height:10px;padding-left:3px;color:#333;white-space:nowrap">Microsoft Edge</div>
</div></body></html>
